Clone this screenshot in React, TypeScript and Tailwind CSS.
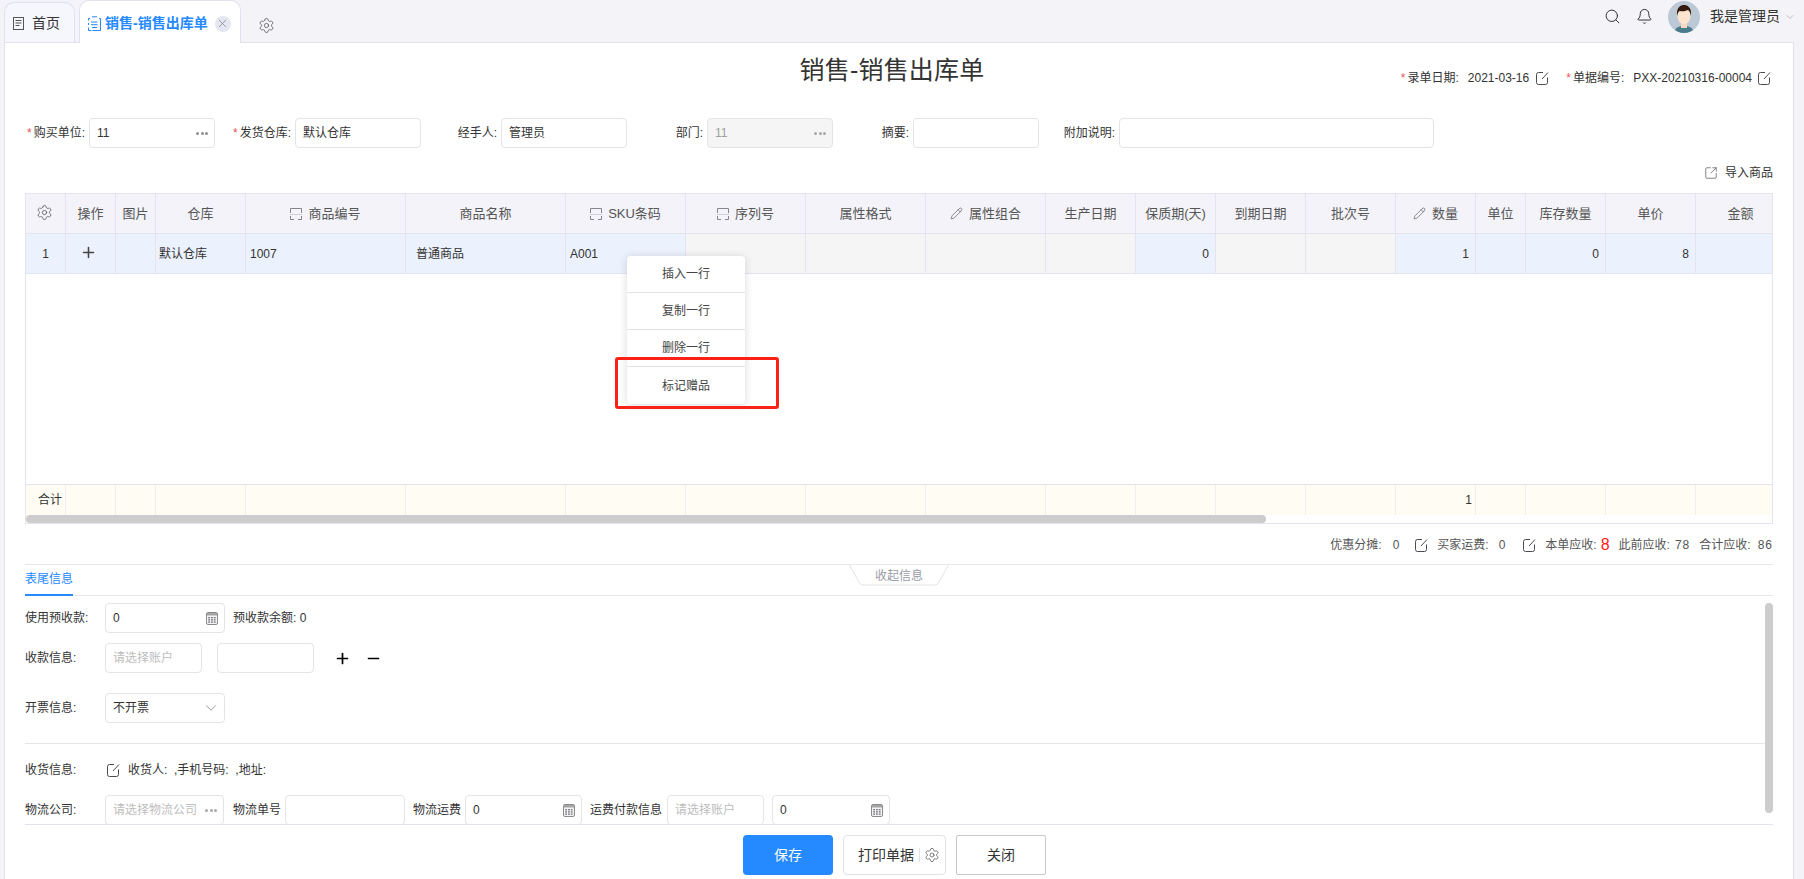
import React from "react";
import { Settings, Search, Bell, ChevronDown, Pencil, X, Plus, Minus, SquareArrowOutUpRight } from "lucide-react";

const Star = () => <span className="text-[#e8555a] mr-[2px]">*</span>;

const Dots = ({ light }: { light?: boolean }) => (
  <span className="flex gap-[1.5px]">
    {[0, 1, 2].map((i) => (
      <span key={i} className={`w-[3px] h-[3px] rounded-full ${light ? "bg-[#a8a8a8]" : "bg-[#8f8f8f]"}`} />
    ))}
  </span>
);

const Calc = () => (
  <svg width="12" height="13" viewBox="0 0 12 13" fill="none">
    <rect x="0.5" y="0.5" width="11" height="12" rx="1.5" fill="#f4f4f4" stroke="#8a8a8a" />
    <rect x="1" y="1" width="10" height="2.500" fill="#a5a5a5" />
    {[2.2, 5, 7.8].map((x) =>
      [5, 7.2, 9.4].map((y) => <rect key={`${x}${y}`} x={x} y={y} width="1.800" height="1.400" fill="#7b7b84" />)
    )}
  </svg>
);

const Scan = () => (
  <svg width="12" height="12" viewBox="0 0 12 12" fill="none" stroke="#85858f">
    <path d="M0.500 5V0.500h11V5" />
    <path d="M0 6.500h12" stroke="#cfcfd8" />
    <path d="M0.500 8v3.500h3.500M8 11.500h3.500V8" />
  </svg>
);

const Edit = () => (
  <svg width="13" height="14" viewBox="0 0 13 14" fill="none" stroke="#4a4a52" strokeWidth="1" className="shrink-0 block">
    <path d="M7 1.500H2.500a2 2 0 0 0-2 2v8a2 2 0 0 0 2 2h7a2 2 0 0 0 2-2V6.500" />
    <path d="M6 8l6-6.500" />
  </svg>
);

const Box = ({
  w,
  children,
  gray,
  right,
}: {
  w: string;
  children?: React.ReactNode;
  gray?: boolean;
  right?: React.ReactNode;
}) => (
  <div
    className={`${w} h-[30px] shrink-0 flex items-center justify-between pl-[7px] pr-[6px] border border-[#e4e4e8] rounded-[4px] text-[12px] ${
      gray ? "bg-[#f5f5f5] text-[#a0a0a0]" : "bg-white text-[#333]"
    }`}
  >
    <span className="whitespace-nowrap">{children}</span>
    {right}
  </div>
);

const Ph = ({ children }: { children: React.ReactNode }) => <span className="text-[#bdbdbd]">{children}</span>;

const Field = ({
  label,
  star,
  w = "w-[126px]",
  children,
  gray,
  right,
}: {
  label: string;
  star?: boolean;
  w?: string;
  children?: React.ReactNode;
  gray?: boolean;
  right?: React.ReactNode;
}) => (
  <div className="flex items-center gap-[4px]">
    <div className="w-[60px] text-right text-[12px] text-[#333] whitespace-nowrap">
      {star && <Star />}
      {label}
    </div>
    <Box w={w} gray={gray} right={right}>
      {children}
    </Box>
  </div>
);

const cols: { t: string; icon?: "scan" | "pen" }[] = [
  { t: "" },
  { t: "操作" },
  { t: "图片" },
  { t: "仓库" },
  { t: "商品编号", icon: "scan" },
  { t: "商品名称" },
  { t: "SKU条码", icon: "scan" },
  { t: "序列号", icon: "scan" },
  { t: "属性格式" },
  { t: "属性组合", icon: "pen" },
  { t: "生产日期" },
  { t: "保质期(天)" },
  { t: "到期日期" },
  { t: "批次号" },
  { t: "数量", icon: "pen" },
  { t: "单位" },
  { t: "库存数量" },
  { t: "单价" },
  { t: "金额" },
];

const gridCols =
  "grid grid-cols-[40px_50px_40px_90px_160px_160px_120px_120px_120px_120px_90px_80px_90px_90px_80px_50px_80px_90px_90px] w-max";

const grayIdx = [7, 8, 9, 10, 12, 13];

const rowCells: Record<number, { t: string; cls: string }> = {
  3: { t: "默认仓库", cls: "pl-[3px] justify-start" },
  4: { t: "1007", cls: "pl-[4px] justify-start" },
  5: { t: "普通商品", cls: "pl-[10px] justify-start" },
  6: { t: "A001", cls: "pl-[4px] justify-start" },
  11: { t: "0", cls: "pr-[6px] justify-end" },
  14: { t: "1", cls: "pr-[6px] justify-end" },
  16: { t: "0", cls: "pr-[6px] justify-end" },
  17: { t: "8", cls: "pr-[6px] justify-end" },
};

const Label = ({ children, w = "w-[80px]" }: { children: React.ReactNode; w?: string }) => (
  <div className={`${w} shrink-0 text-[12px] text-[#333] whitespace-nowrap`}>{children}</div>
);

export default function App() {
  return (
    <div className="relative w-[1804px] h-[879px] overflow-hidden flex flex-col bg-[#f3f3f8] text-[#333] font-['Liberation_Sans','Noto_Sans_CJK_SC',sans-serif]">
      {/* tab bar */}
      <div className="h-[42px] shrink-0 flex items-end pl-[4px] pr-[8px]">
        <div className="w-[71px] h-[40px] flex items-center gap-[8px] pl-[8px] pt-[2px] bg-[#f6f6fd] border border-b-0 border-[#e2e2ee] rounded-t-[10px] text-[14px]">
          <svg width="11" height="13" viewBox="0 0 11 13" fill="none" stroke="#555" className="shrink-0">
            <rect x="0.5" y="0.5" width="10" height="12" />
            <path d="M2.5 3.5h6M2.5 6h6M2.5 8.5h4" />
          </svg>
          <span>首页</span>
        </div>
        <div className="relative -mb-px z-10 ml-[4px] w-[162px] h-[43px] flex items-center pl-[7px] pt-[3px] bg-white border border-b-0 border-[#e2e2ee] rounded-t-[10px] text-[14px] font-bold text-[#2589ff]">
          <svg width="15" height="16" viewBox="0 0 15 16" fill="none" stroke="#2589ff" className="shrink-0">
            <path d="M3 2.5h-1.500v2M1.500 7v2M1.500 11.500v3h3M5 0.800h5M12 2.500h1.500v12h-8" />
            <path d="M4 6h6.500M4 8.700h6.500M5 11.500h5" />
          </svg>
          <span className="ml-[3px] whitespace-nowrap">销售-销售出库单</span>
          <span className="ml-[7px] w-[16px] h-[16px] rounded-full bg-[#e6e6f3] flex items-center justify-center">
            <X size={13} strokeWidth={1.2} className="text-[#777]" />
          </span>
        </div>
        <Settings size={17} strokeWidth={1.1} className="ml-[17px] mb-[8px] text-[#555]" />
        <div className="ml-auto flex items-center h-[42px] -mt-[9px] self-start pt-[9px] text-[14px]">
          <Search size={17} strokeWidth={1.4} className="text-[#333]" />
          <Bell size={17} strokeWidth={1.4} className="ml-[15px] text-[#333]" />
          <svg width="32" height="32" viewBox="0 0 32 32" className="ml-[15px] shrink-0">
            <defs>
              <clipPath id="av">
                <circle cx="16" cy="16" r="16" />
              </clipPath>
            </defs>
            <g clipPath="url(#av)">
              <rect width="32" height="32" fill="#bcc8d6" />
              <path d="M6 32c1-6 5-7 10-7s9 1 10 7z" fill="#4b7c8c" />
              <rect x="13" y="20" width="6" height="7" fill="#f5d8bf" />
              <ellipse cx="16" cy="15" rx="6.500" ry="8.500" fill="#fde4cf" />
              <path d="M9 15c-1-9 4-11 7-11s8 2 7 11c-.5-3-1.500-5-3-6-3 1.500-6 1.500-8.500 1-1.500 1-2 3-2.500 5z" fill="#35190f" />
            </g>
          </svg>
          <span className="ml-[10px] whitespace-nowrap">我是管理员</span>
          <ChevronDown size={12} strokeWidth={1} className="ml-[4px] text-[#888]" />
        </div>
      </div>

      {/* panel */}
      <div className="flex-1 min-h-0 ml-[4px] mr-[10px] bg-white border border-b-0 border-[#e2e2ee] pl-[20px] pr-[20px] flex flex-col">
        <div className="grid grid-cols-[1fr_auto_1fr] pt-[10px] h-[44px] shrink-0">
          <div />
          <div className="pr-[14px] h-[34px] leading-[34px] text-[25px] tracking-[0.2px] text-[#333] whitespace-nowrap">销售-销售出库单</div>
          <div className="flex items-center justify-end h-[16px] mt-[17px] text-[12px] whitespace-nowrap pr-[2px]">
            <Star />
            <span>录单日期:</span>
            <span className="ml-[9px]">2021-03-16</span>
            <span className="ml-[7px]"><Edit /></span>
            <span className="ml-[17px]"><Star /></span>
            <span>单据编号:</span>
            <span className="ml-[9px]">PXX-20210316-00004</span>
            <span className="ml-[6px]"><Edit /></span>
          </div>
        </div>

        <div className="flex gap-[16px] mt-[31px] shrink-0">
          <Field label="购买单位:" star right={<Dots />}>11</Field>
          <Field label="发货仓库:" star>默认仓库</Field>
          <Field label="经手人:">管理员</Field>
          <Field label="部门:" gray right={<Dots light />}>11</Field>
          <Field label="摘要:" />
          <Field label="附加说明:" w="w-[315px]" />
        </div>

        <div className="h-[16px] mt-[17px] shrink-0 flex items-center justify-end gap-[7px] text-[12px]">
          <SquareArrowOutUpRight size={14} strokeWidth={1.2} className="text-[#555]" />
          <span>导入商品</span>
        </div>

        {/* table */}
        <div className="mt-[12px] h-[331px] shrink-0 border border-[#e4e4ee] overflow-hidden flex flex-col">
          <div className={`${gridCols} h-[39px] shrink-0 bg-[#f3f3f9]`}>
            {cols.map((c, i) => (
              <div key={i} className="flex items-center justify-center gap-[6px] border-r border-[#e4e4ee] text-[13px] text-[#555] whitespace-nowrap">
                {i === 0 && <Settings size={17} strokeWidth={1.1} className="text-[#555] -mt-[2px] -ml-[2px]" />}
                {c.icon === "scan" && <Scan />}
                {c.icon === "pen" && <Pencil size={13} strokeWidth={1.1} className="text-[#444]" />}
                {c.t}
              </div>
            ))}
          </div>
          <div className={`${gridCols} h-[41px] shrink-0 bg-[#ebf1fd] border-y border-[#e4e4ee]`}>
            {cols.map((_, i) => {
              const cell = rowCells[i];
              return (
                <div
                  key={i}
                  className={`flex items-center border-r border-[#e4e4ee] text-[12px] text-[#333] ${grayIdx.includes(i) ? "bg-[#f5f5f5]" : ""} ${cell ? cell.cls : "justify-center"}`}
                >
                  {i === 0 && "1"}
                  {i === 1 && <Plus size={17} strokeWidth={2.2} className="text-[#444] -ml-[4px] -mt-[3px]" />}
                  {cell && cell.t}
                </div>
              );
            })}
          </div>
          <div className="flex-1 min-h-0" />
          <div className={`${gridCols} h-[31px] shrink-0 bg-[#fffcf3] border-t border-[#e4e4ee]`}>
            {cols.map((_, i) => (
              <div key={i} className="flex items-center border-r border-[#eeeeee] text-[12px] justify-end pr-[3px]">
                {i === 0 && "合计"}
                {i === 14 && "1"}
              </div>
            ))}
          </div>
          <div className="h-[8px] shrink-0">
            <div className="w-[1240px] h-[8px] rounded-[4px] bg-[#cdcdcd]" />
          </div>
        </div>

        {/* stats */}
        <div className="h-[40px] shrink-0 flex items-center justify-end text-[12px] text-[#555] whitespace-nowrap pt-[1px]">
          <span>优惠分摊:</span>
          <span className="ml-[11px]">0</span>
          <span className="ml-[16px]"><Edit /></span>
          <span className="ml-[9px]">买家运费:</span>
          <span className="ml-[10px]">0</span>
          <span className="ml-[18px]"><Edit /></span>
          <span className="ml-[9px]">本单应收:</span>
          <span className="ml-[4px] text-[16px] text-[#ff1a1a]">8</span>
          <span className="ml-[9px]">此前应收:</span>
          <span className="ml-[5px] tracking-[1px]">78</span>
          <span className="ml-[9px]">合计应收:</span>
          <span className="ml-[7px] tracking-[1px]">86</span>
        </div>

        {/* tab strip */}
        <div className="relative h-[32px] shrink-0 border-y border-[#e6e6ec]">
          <div className="w-[48px] h-[31px] pt-[6px] text-[12px] leading-[16px] text-[#2589ff] border-b-2 border-[#2589ff] whitespace-nowrap">表尾信息</div>
          <div className="absolute left-[824px] top-0 w-[100px] h-[21px] flex items-center justify-center text-[12px] text-[#9a9aa6]">
            <svg width="100" height="21" viewBox="0 0 100 21" fill="none" className="absolute inset-0">
              <path d="M0.500 0l9.500 17c1 2 2.500 3 5 3h70c2.500 0 4-1 5-3l9.500-17" stroke="#e2e2e8" />
            </svg>
            <span className="relative">收起信息</span>
          </div>
        </div>

        {/* scrolled footer */}
        <div className="h-[229px] shrink-0 flex border-b border-[#e2e2ee] overflow-hidden">
          <div className="flex-1 min-w-0 pt-[7px] flex flex-col">
            <div className="flex items-center">
              <Label>使用预收款:</Label>
              <Box w="w-[120px]" right={<Calc />}>0</Box>
              <span className="ml-[8px] text-[12px] whitespace-nowrap">预收款余额: 0</span>
            </div>
            <div className="flex items-center mt-[10px]">
              <Label>收款信息:</Label>
              <Box w="w-[97px]"><Ph>请选择账户</Ph></Box>
              <div className="ml-[15px]"><Box w="w-[97px]" /></div>
              <Plus size={17} strokeWidth={2.4} className="ml-[20px] text-black" />
              <Minus size={17} strokeWidth={2.4} className="ml-[14px] text-black" />
            </div>
            <div className="flex items-center mt-[20px]">
              <Label>开票信息:</Label>
              <Box w="w-[120px]" right={<ChevronDown size={18} strokeWidth={1} className="text-[#777] -mr-[2px]" />}>不开票</Box>
            </div>
            <div className="mt-[20px] border-t border-[#e6e6ee]" />
            <div className="h-[16px] mt-[18px] flex items-center text-[12px]">
              <Label>收货信息:</Label>
              <span className="ml-[2px]"><Edit /></span>
              <span className="ml-[8px] whitespace-pre">收货人:  ,手机号码:  ,地址:</span>
            </div>
            <div className="flex items-center mt-[17px]">
              <Label>物流公司:</Label>
              <Box w="w-[119px]" right={<Dots light />}><Ph>请选择物流公司</Ph></Box>
              <Label w="ml-[9px] w-[52px]">物流单号</Label>
              <Box w="w-[120px]" />
              <Label w="ml-[8px] w-[52px]">物流运费</Label>
              <Box w="w-[117px]" right={<Calc />}>0</Box>
              <Label w="ml-[8px] w-[77px]">运费付款信息</Label>
              <Box w="w-[97px]"><Ph>请选择账户</Ph></Box>
              <div className="ml-[8px]"><Box w="w-[118px]" right={<Calc />}>0</Box></div>
            </div>
          </div>
          <div className="w-[8px] shrink-0 pt-[7px]">
            <div className="h-[210px] rounded-[4px] bg-[#cdcdcd]" />
          </div>
        </div>

        {/* buttons */}
        <div className="flex gap-[10px] pl-[718px] pt-[10px] shrink-0">
          <button className="w-[90px] h-[40px] rounded-[4px] bg-[#2589ff] text-white text-[14px]">保存</button>
          <button className="w-[103px] h-[40px] rounded-[4px] border border-[#e2e2e6] flex items-center pl-[14px] text-[14px] text-[#333] bg-white">
            打印单据
            <span className="ml-[5px] h-[14px] border-l border-[#e2e2e6]" />
            <Settings size={16} strokeWidth={1.1} className="ml-[4px] text-[#555]" />
          </button>
          <button className="w-[90px] h-[40px] rounded-[2px] border border-[#c8c8c8] text-[14px] text-[#333] bg-white">关闭</button>
        </div>
      </div>

      {/* context menu */}
      <div className="absolute left-[627px] top-[256px] w-[118px] bg-white rounded-[4px] shadow-[0_1px_8px_rgba(0,0,0,0.15)] z-20 text-[12px] text-[#444]">
        {["插入一行", "复制一行", "删除一行", "标记赠品"].map((t, i) => (
          <div key={t} className={`h-[37px] flex items-center justify-center ${i < 3 ? "border-b border-[#e2e2e2]" : ""}`}>
            {t}
          </div>
        ))}
      </div>
      {/* red annotation */}
      <div className="absolute left-[615px] top-[357px] w-[164px] h-[52px] border-[3px] border-[#fb2117] rounded-[3px] z-30" />
    </div>
  );
}
